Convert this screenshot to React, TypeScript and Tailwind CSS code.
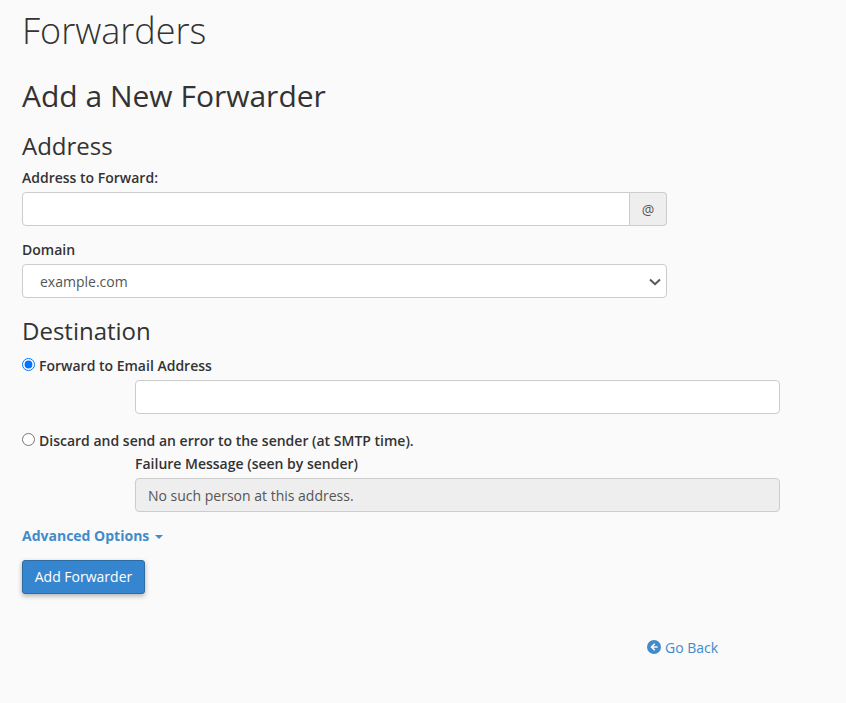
function GoBackIcon() {
  return (
    <svg viewBox="0 0 14 14" className="h-[14px] w-[14px]">
      <circle cx="7" cy="7" r="7" fill="#428bca" />
      <path d="M7.2 3.2 3.4 7l3.8 3.8 1.1-1.1-1.9-1.9h4.2V6.2H6.400l1.900-1.900z" fill="#fafafa" />
    </svg>
  )
}

export default function App() {
  return (
    <div className="min-h-[703px] bg-[#fafafa] pl-[22px] font-['Open_Sans',sans-serif] text-[14px] text-[#333]">
      <h1 className="pt-[8px] text-[36px] leading-[45px] font-light text-[#333]">Forwarders</h1>

      <form className="w-[758px]" onSubmit={(e) => e.preventDefault()}>
        <h2 className="mt-[26px] text-[30px] leading-[33px] font-normal">Add a New Forwarder</h2>
        <h3 className="mt-[20px] text-[24px] leading-[28px] font-normal">Address</h3>

        <label className="mt-[8px] block text-[14px] leading-[20px] font-semibold">Address to Forward:</label>
        <div className="mt-[4px] flex h-[34px] w-[645px]">
          <input
            type="text"
            className="min-w-0 flex-1 rounded-l-[4px] border border-[#ccc] bg-white px-3 py-1.5 outline-none"
          />
          <span className="flex w-[37px] items-center justify-center rounded-r-[4px] border border-l-0 border-[#ccc] bg-[#eee] text-[14px] text-[#555]">
            @
          </span>
        </div>

        <label className="mt-[14px] block text-[14px] leading-[20px] font-semibold">Domain</label>
        <div className="relative mt-[4px] h-[34px] w-[645px]">
          <select className="block h-full w-full appearance-none rounded-[4px] border border-[#ccc] bg-white px-[17px] text-[14px] text-[#555] outline-none">
            <option>example.com</option>
          </select>
          <svg viewBox="0 0 12 8" className="pointer-events-none absolute top-[14px] right-[6px] h-[8px] w-[12px]">
            <path d="M1 1.500 6 6.200 11 1.500" fill="none" stroke="#555" strokeWidth="2" />
          </svg>
        </div>

        <h3 className="mt-[19px] text-[24px] leading-[28px] font-normal">Destination</h3>

        <label className="mt-[11px] flex h-[20px] items-center text-[14px] leading-[20px] font-semibold">
          <input type="radio" name="dest" defaultChecked className="mr-[4px] ml-0 h-[13px] w-[13px] -translate-y-[2px]" />
          Forward to Email Address
        </label>
        <div className="mt-[4px] pl-[113px]">
          <input
            type="text"
            className="block h-[34px] w-[645px] rounded-[4px] border border-[#ccc] bg-white px-3 py-1.5 outline-none"
          />
        </div>

        <label className="mt-[17px] flex h-[20px] items-center text-[14px] leading-[20px] font-semibold">
          <input type="radio" name="dest" className="mr-[4px] ml-0 h-[13px] w-[13px] -translate-y-[2px]" />
          Discard and send an error to the sender (at SMTP time).
        </label>
        <div className="pl-[113px]">
          <label className="mt-[3px] block text-[14px] leading-[20px] font-semibold">Failure Message (seen by sender)</label>
          <input
            type="text"
            disabled
            value="No such person at this address."
            className="mt-[4px] block h-[34px] w-[645px] rounded-[4px] border border-[#ccc] bg-[#eee] px-3 py-1.5 text-[14px] text-[#555] outline-none"
          />
        </div>

        <a className="mt-[13px] flex h-[20px] items-center text-[14px] font-bold text-[#428bca]">
          Advanced Options
          <span className="ml-[6px] h-0 w-0 translate-y-[2px] border-x-[4px] border-t-[4px] border-x-transparent border-t-[#428bca]" />
        </a>

        <button
          type="submit"
          className="mt-[15px] block h-[34px] w-[123px] rounded-[3px] border border-[#2e6da4] bg-[#3685cf] pb-[2px] text-[14px] text-white shadow-[0_2px_5px_rgba(0,0,0,0.3)]"
        >
          Add Forwarder
        </button>
      </form>

      <a className="mt-[43px] ml-[625px] flex h-[20px] w-fit items-center gap-[4px] text-[14px] text-[#428bca]">
        <GoBackIcon />
        Go Back
      </a>
    </div>
  )
}
